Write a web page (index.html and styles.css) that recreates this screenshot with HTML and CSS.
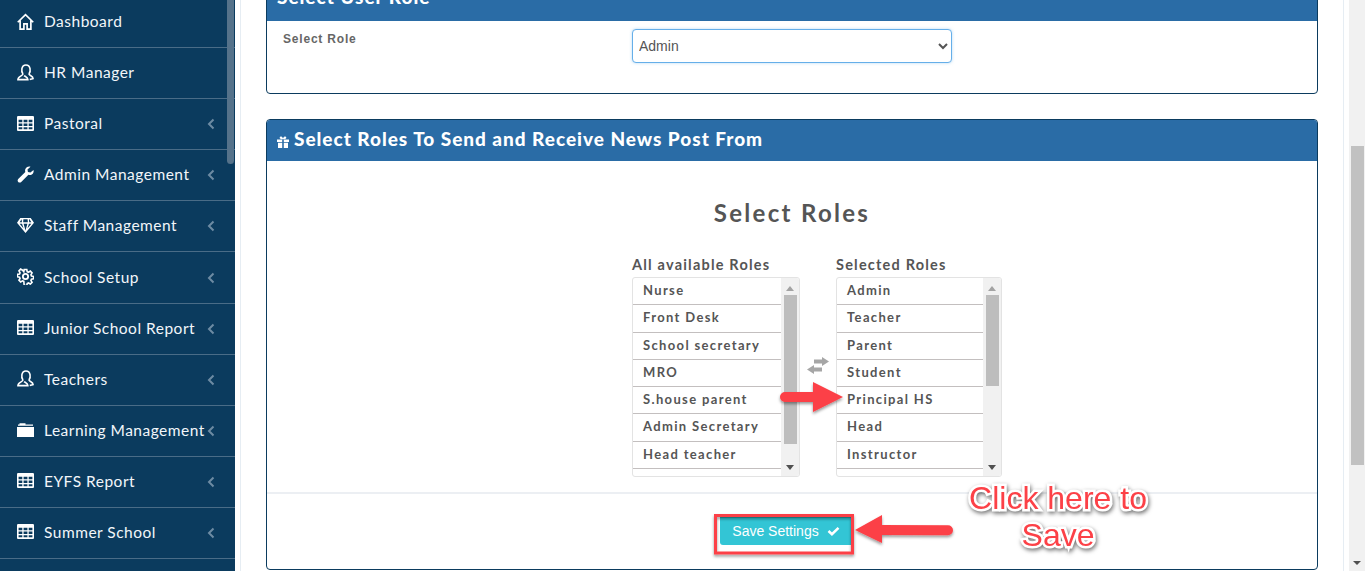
FILE: index.html
```html
<!DOCTYPE html>
<html lang="en">
<head>
<meta charset="utf-8">
<title>Select Roles</title>
<link rel="stylesheet" href="styles.css">
</head>
<body>
<svg class="defs" width="0" height="0">
  <symbol id="i-home" viewBox="0 0 18 18"><path d="M.8 9.800 9 1.800l8.200 8M3.300 8v9h4v-5.500h3.400V17h4V8" fill="none" stroke="currentColor" stroke-width="1.800"/></symbol>
  <symbol id="i-user" viewBox="0 0 18 18"><g fill="none" stroke="currentColor" stroke-width="1.700"><path d="M6.300 10.500C4.300 8 4.300 1 9.500 1s5.200 7 3.200 9.500"/><path d="M6.300 10.500c.3 2-5.300 2.300-5.300 6h10.500c0-2.500-3-3.300-4-4.200"/><path d="M12.700 10.500c-.2 1.500 4.600 2 4.300 5l-3.500 1"/></g></symbol>
  <symbol id="i-table" viewBox="0 0 16 14"><path fill-rule="evenodd" d="M1 0h14a1 1 0 0 1 1 1v12a1 1 0 0 1-1 1H1a1 1 0 0 1-1-1V1a1 1 0 0 1 1-1zM1.500 3.500v2.300h3.500V3.500zm4.700 0v2.300h3.600V3.500zm4.800 0v2.300h3.500V3.500zM1.500 7v2.300h3.500V7zm4.700 0v2.300h3.600V7zM11 7v2.300h3.500V7zM1.500 10.500v2h3.500v-2zm4.700 0v2h3.600v-2zm4.800 0v2h3.500v-2z" fill="currentColor"/></symbol>
  <symbol id="i-wrench" viewBox="0 0 18 18"><path d="M17.500 4.200c.5 2-.2 3.800-1.800 4.700-1.200.7-2.500.7-3.600.3L4.500 17c-.8.800-2.400.8-3.200 0s-.8-2.400 0-3.200l7.500-7.500c-.4-1.200-.3-2.500.4-3.600C10.100 1 12.200.2 14.300.8l-3.200 3 .5 2.600 2.600.5z" fill="currentColor"/></symbol>
  <symbol id="i-gem" viewBox="0 0 18 16"><path fill-rule="evenodd" d="M3.500 0h11L18 5.200 9 16 0 5.200zM4.800 1.500 2.800 4.500h2.500zm2 0-.3 3h5l-.3-3zm5.900 0 .2 3h2.300l-2-3zM2.800 6.200l4.200 5-1.700-5zm4.200 0L9 13.200l2-7zm5.700 0-1.700 5 4.200-5z" fill="currentColor"/></symbol>
  <symbol id="i-gear" viewBox="0 0 18 18"><g fill="none" stroke="currentColor" stroke-width="1.900"><circle cx="9" cy="9" r="2.800"/><path d="M7.500 1h3l.5 2.500 1.500.7 2.200-1.300 2 2.100-1.300 2.200.6 1.400 2.500.5v2.800l-2.500.6-.6 1.400 1.300 2.200-2 2-2.200-1.300-1.500.7-.5 2.500h-3L7 15l-1.500-.7-2.200 1.300-2-2 1.300-2.200-.6-1.400L-.5 9.500V6.700L2 6.200l.6-1.400-1.300-2.200 2-2.100 2.200 1.300L7 3.500z" transform="translate(.9 .7) scale(.9)"/></g></symbol>
  <symbol id="i-folder" viewBox="0 0 17 15"><path d="M0 5h17v10H0zM1 3.800V2.500h1.500V1.200h6V2.500H16v1.300z" fill="currentColor"/></symbol>
  <symbol id="i-chev" viewBox="0 0 8 12"><path d="M6.500 1.500 2 6l4.500 4.500" fill="none" stroke="currentColor" stroke-width="2"/></symbol>
</svg>

<div class="app">
  <aside class="sidebar">
    <nav class="menu">
      <a class="item"><svg class="ic"><use href="#i-home"/></svg><span class="label">Dashboard</span></a>
      <a class="item"><svg class="ic"><use href="#i-user"/></svg><span class="label">HR Manager</span></a>
      <a class="item"><svg class="ic"><use href="#i-table"/></svg><span class="label">Pastoral</span><svg class="chev"><use href="#i-chev"/></svg></a>
      <a class="item"><svg class="ic"><use href="#i-wrench"/></svg><span class="label">Admin Management</span><svg class="chev"><use href="#i-chev"/></svg></a>
      <a class="item"><svg class="ic"><use href="#i-gem"/></svg><span class="label">Staff Management</span><svg class="chev"><use href="#i-chev"/></svg></a>
      <a class="item"><svg class="ic"><use href="#i-gear"/></svg><span class="label">School Setup</span><svg class="chev"><use href="#i-chev"/></svg></a>
      <a class="item"><svg class="ic"><use href="#i-table"/></svg><span class="label">Junior School Report</span><svg class="chev"><use href="#i-chev"/></svg></a>
      <a class="item"><svg class="ic"><use href="#i-user"/></svg><span class="label">Teachers</span><svg class="chev"><use href="#i-chev"/></svg></a>
      <a class="item"><svg class="ic"><use href="#i-folder"/></svg><span class="label">Learning Management</span><svg class="chev"><use href="#i-chev"/></svg></a>
      <a class="item"><svg class="ic"><use href="#i-table"/></svg><span class="label">EYFS Report</span><svg class="chev"><use href="#i-chev"/></svg></a>
      <a class="item"><svg class="ic"><use href="#i-table"/></svg><span class="label">Summer School</span><svg class="chev"><use href="#i-chev"/></svg></a>
    </nav>
    <div class="side-thumb"></div>
  </aside>

  <main class="main">
    <div class="content">
      <section class="card card-role">
        <h2 class="card-head head-clipped">Select User Role</h2>
        <div class="role-row">
          <label class="role-label" for="role">Select Role</label>
          <select class="role-select" id="role"><option>Admin</option></select>
        </div>
      </section>

      <section class="card card-news">
        <h2 class="card-head head-news">
          <svg class="gift" viewBox="0 0 12 12"><path d="M0 3.500h5.200V6H0zM6.800 3.500H12V6H6.800zM1 6.800h4.200V12H1zM6.800 6.800H11V12H6.800zM6 3.200C4 3.400 2.500 2.800 2.700 1.500 3 .2 5 0 6 2.500 7 0 9 .2 9.300 1.500 9.500 2.800 8 3.400 6 3.200z" fill="currentColor"/></svg>
          Select Roles To Send and Receive News Post From
        </h2>
        <div class="news-body">
          <h3 class="picker-title">Select Roles</h3>
          <div class="picker">
            <div class="col">
              <div class="col-title">All available Roles</div>
              <div class="listbox">
                <ul class="opts">
                  <li>Nurse</li><li>Front Desk</li><li>School secretary</li><li>MRO</li><li>S.house parent</li><li>Admin Secretary</li><li>Head teacher</li>
                </ul>
                <div class="sbar"><span class="up"></span><span class="thumb thumb-long"></span><span class="down"></span></div>
              </div>
            </div>
            <svg class="swap" viewBox="0 0 22 17"><path d="M7 2.500h8V0l7 4.500L15 9V6.500H7zM15 10.500H7V8l-7 4.500L7 17v-2.500h8z" fill="#a6a6a6"/></svg>
            <div class="col">
              <div class="col-title">Selected Roles</div>
              <div class="listbox">
                <ul class="opts">
                  <li>Admin</li><li>Teacher</li><li>Parent</li><li>Student</li><li>Principal HS</li><li>Head</li><li>Instructor</li>
                </ul>
                <div class="sbar"><span class="up"></span><span class="thumb thumb-short"></span><span class="down"></span></div>
              </div>
            </div>
          </div>
        </div>
        <div class="news-foot">
          <button class="save" type="button">Save Settings
            <svg class="check" viewBox="0 0 14 11"><path d="M1.500 5.500 5.300 9 12.500 2" fill="none" stroke="currentColor" stroke-width="2.800"/></svg>
          </button>
        </div>
      </section>
    </div>
  </main>

  <div class="page-sbar"><span class="page-thumb"></span><span class="page-down"></span></div>

  <svg class="arrows" viewBox="0 0 1365 571">
    <defs><filter id="sh" x="-20%" y="-40%" width="140%" height="180%"><feDropShadow dx="0" dy="2" stdDeviation="1.500" flood-color="#000" flood-opacity=".4"/></filter></defs>
    <g filter="url(#sh)" fill="#fc4147">
      <path d="M785 392h28v-10l30 15-30 15v-10h-28a5 5 0 0 1 0-10z"/>
      <path d="M855 530l27-15v10l66 .3a5 5 0 0 1 0 10l-66-.3v8z"/>
    </g>
    <rect class="save-frame" x="715.500" y="515.500" width="137" height="37.500" filter="url(#sh)"/>
  </svg>
  <div class="callout">Click here to<br>Save</div>
</div>
</body>
</html>
```

FILE: styles.css
```css
* { box-sizing: border-box; }
html, body { margin: 0; height: 100%; overflow: hidden; background: #fff; }
.defs { position: absolute; }
.app { position: relative; display: flex; width: 1365px; height: 571px; overflow: hidden; font-family: "Lato", "Liberation Sans", sans-serif; }

/* sidebar */
.sidebar { position: relative; width: 235px; flex: none; background: #0b3b5e; overflow: hidden; }
.menu { margin-top: -3px; }
.item { display: flex; align-items: center; height: 51.100px; padding: 0 0 2px 17px; border-bottom: 1px solid #4a6c87; color: #f2f6fa; font-size: 15.500px; letter-spacing: .5px; }
.ic { width: 17px; height: 17px; margin-right: 10px; flex: none; color: #fff; }
.label { white-space: nowrap; flex: none; width: 163px; }
.chev { width: 8px; height: 12px; margin-top: 2px; color: #6d8ba3; flex: none; }
.side-thumb { position: absolute; top: 0; left: 227px; width: 7px; height: 164px; background: #55728a; border-radius: 0 0 4px 4px; }

/* main */
.main { flex: none; width: 1114px; padding-left: 5px; padding-right: 5px; }
.content { height: 571px; padding: 0 25px; border-left: 1px solid #e6edf3; border-right: 1px solid #e6edf3; overflow: hidden; }
.card { border: 1px solid #0b3b5e; border-radius: 4px; overflow: hidden; background: #fff; }
.card-role { margin-top: -20px; height: 114px; }
.card-news { margin-top: 25px; height: 451px; }
.card-head { margin: 0; background: #2a6ca6; color: #fff; font-weight: 900; letter-spacing: .97px; }
.head-clipped { height: 40px; padding: 5px 0 0 10px; font-size: 19px; line-height: 22px; }
.head-news { display: flex; align-items: center; height: 41px; padding: 0 0 4px 10px; font-size: 19px; }
.gift { width: 12px; height: 12px; margin: 6px 5px 0 0; }
.role-row { display: grid; grid-template-columns: 349px 320px; padding: 8px 0 0 16px; }
.role-label { padding-top: 3px; font: 700 12px "Liberation Sans", sans-serif; letter-spacing: .8px; color: #666; }
.role-select { height: 34px; padding: 0 2px; background: #fff; border: 1px solid #66afe9; border-radius: 4px; color: #555; font: 14px "Liberation Sans", sans-serif; box-shadow: 0 0 3px rgba(102,175,233,.5); }

.news-body { height: 333px; border-bottom: 2px solid #eceff3; display: flex; flex-direction: column; align-items: center; }
.picker-title { margin: 38px 0 0; color: #555; font-size: 24px; line-height: 28px; font-weight: 700; letter-spacing: 2.300px; }
.picker { display: flex; align-items: center; margin: 29px 0 0 50px; }
.col { width: 168px; }
.col + .swap + .col { width: 166px; }
.col-title { font-size: 14.500px; line-height: 18px; font-weight: 700; color: #555; letter-spacing: 1.200px; margin-bottom: 3px; }
.listbox { display: flex; height: 200px; border: 1px solid #e3e3e3; border-radius: 3px; overflow: hidden; }
.opts { flex: 1; margin: 0; padding: 0; list-style: none; overflow: hidden; }
.opts li { height: 27.300px; padding: 4px 0 0 10px; border-bottom: 1px solid #c3bfbf; color: #555; font-size: 13px; line-height: 16px; font-weight: 700; letter-spacing: 1.350px; white-space: nowrap; }
.sbar { position: relative; width: 18px; flex: none; background: #f1f1f1; display: flex; flex-direction: column; align-items: center; padding: 0 2px; }
.up { width: 0; height: 0; margin: 8px 0 4px; border: 4px solid transparent; border-top: 0; border-bottom: 5px solid #a3a3a3; }
.down { position: absolute; bottom: 6px; left: 5px; width: 0; height: 0; border: 4px solid transparent; border-bottom: 0; border-top: 5px solid #505050; }
.thumb { width: 13px; background: #bdbdbd; }
.thumb-long { height: 149px; }
.thumb-short { height: 91px; }
.swap { width: 22px; height: 17px; margin: -2px 7px 0; flex: none; }

.news-foot { display: flex; justify-content: center; padding: 21px 12px 0 0; }
.save { display: inline-flex; align-items: center; justify-content: center; gap: 8px; width: 132px; height: 30px; border: 0; border-top: 3px solid #2aa0ab; border-radius: 3px 0 0 3px; background: #33c5d5; color: #fff; font: 14px "Liberation Sans", sans-serif; padding: 0 0 2px; }
.check { width: 13px; height: 10px; }

/* page scrollbar */
.page-sbar { position: relative; width: 16px; flex: none; background: #f1f1f1; }
.page-thumb { position: absolute; top: 146px; left: 2px; width: 13px; height: 319px; background: #c1c1c1; }
.page-down { position: absolute; bottom: 6px; left: 4px; width: 0; height: 0; border: 4px solid transparent; border-bottom: 0; border-top: 4px solid #505050; }

/* annotations drawn over the screenshot */
.arrows { position: absolute; top: 0; left: 0; width: 1365px; height: 571px; pointer-events: none; }
.save-frame { fill: none; stroke: #fc4147; stroke-width: 3; }
.callout { position: absolute; left: 948px; top: 480px; width: 220px; text-align: center; color: #fc4147; font: 32px/37px "Liberation Sans", sans-serif; -webkit-text-stroke: 5px #fff; paint-order: stroke fill; filter: drop-shadow(1px 2px 2px rgba(0,0,0,.55)); }
```
